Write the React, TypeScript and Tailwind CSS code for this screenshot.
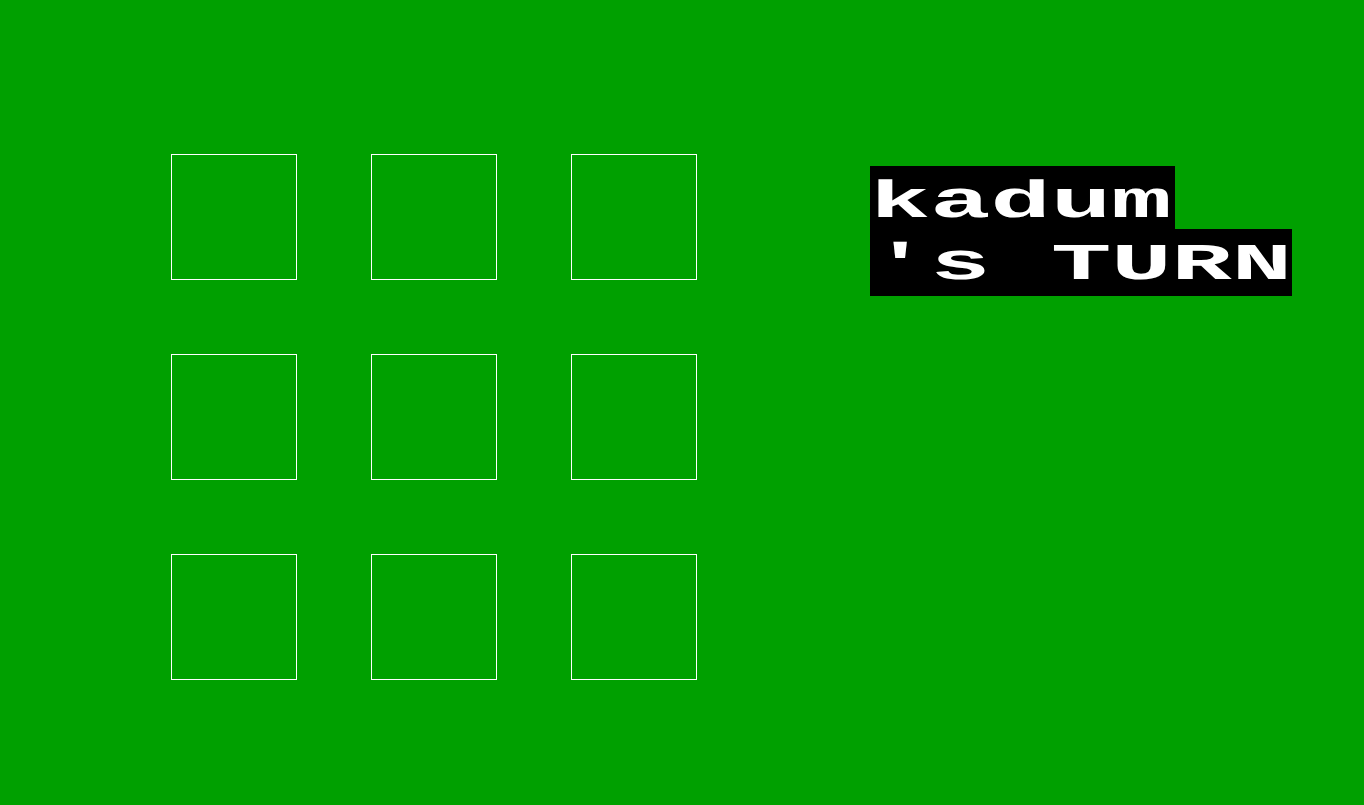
import React from "react";

const cells = Array.from({ length: 9 }, (_, i) => i);

const App: React.FC = () => {
  return (
    <div className="h-[805px] w-full bg-[#00a000] overflow-hidden">
      <div className="flex pt-[154px] pl-[171px]">
        <div className="grid grid-cols-[repeat(3,126px)] gap-[74px]">
          {cells.map((c) => (
            <div key={c} className="h-[126px] w-[126px] border border-white" />
          ))}
        </div>
        <div
          className="ml-[173px] mt-[12px] text-white font-bold text-[51px] leading-[51px]"
          style={{ fontFamily: '"Liberation Mono", "Courier New", monospace' }}
        >
          <div className="h-[63px] w-[305px] bg-black pt-[12px] whitespace-pre">
            <span className="inline-block origin-left scale-x-[1.97]">kadum</span>
          </div>
          <div className="h-[67px] w-[422px] bg-black pt-[11px] whitespace-pre">
            <span className="inline-block origin-left scale-x-[1.97]">'s TURN</span>
          </div>
        </div>
      </div>
    </div>
  );
};

export default App;
